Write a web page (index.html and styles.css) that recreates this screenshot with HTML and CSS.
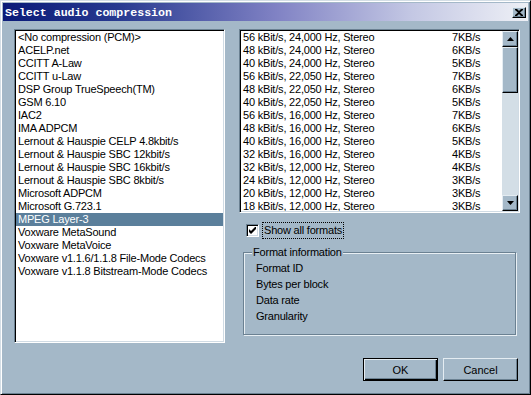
FILE: index.html
```html
<!DOCTYPE html>
<html>
<head>
    <meta charset="utf-8">
    <title>Select audio compression</title>
    <link rel="stylesheet" href="styles.css">
</head>
<body>
    <div class="window">
        <div class="titlebar">
            <span class="title">Select audio compression</span>
            <span class="close">
                <svg width="8" height="7" viewBox="0 0 8 7"><path d="M0 0h2l2 2l2-2h2v1l-3 2.5l3 2.5v1h-2l-2-2l-2 2h-2v-1l3-2.5l-3-2.5z" fill="#000"/></svg>
            </span>
        </div>
        <div class="body">
            <div class="panels">
                <ul class="listbox codecs">
                    <li>&lt;No compression (PCM)&gt;</li>
                    <li>ACELP.net</li>
                    <li>CCITT A-Law</li>
                    <li>CCITT u-Law</li>
                    <li>DSP Group TrueSpeech(TM)</li>
                    <li>GSM 6.10</li>
                    <li>IAC2</li>
                    <li>IMA ADPCM</li>
                    <li>Lernout &amp; Hauspie CELP 4.8kbit/s</li>
                    <li>Lernout &amp; Hauspie SBC 12kbit/s</li>
                    <li>Lernout &amp; Hauspie SBC 16kbit/s</li>
                    <li>Lernout &amp; Hauspie SBC 8kbit/s</li>
                    <li>Microsoft ADPCM</li>
                    <li>Microsoft G.723.1</li>
                    <li class="selected">MPEG Layer-3</li>
                    <li>Voxware MetaSound</li>
                    <li>Voxware MetaVoice</li>
                    <li>Voxware v1.1.6/1.1.8 File-Mode Codecs</li>
                    <li>Voxware v1.1.8 Bitstream-Mode Codecs</li>
                </ul>
                <div class="side">
                    <div class="listbox formats">
                        <ul class="rows">
                            <li><span class="fmt">56 kBit/s, 24,000 Hz, Stereo</span><span>7KB/s</span></li>
                            <li><span class="fmt">48 kBit/s, 24,000 Hz, Stereo</span><span>6KB/s</span></li>
                            <li><span class="fmt">40 kBit/s, 24,000 Hz, Stereo</span><span>5KB/s</span></li>
                            <li><span class="fmt">56 kBit/s, 22,050 Hz, Stereo</span><span>7KB/s</span></li>
                            <li><span class="fmt">48 kBit/s, 22,050 Hz, Stereo</span><span>6KB/s</span></li>
                            <li><span class="fmt">40 kBit/s, 22,050 Hz, Stereo</span><span>5KB/s</span></li>
                            <li><span class="fmt">56 kBit/s, 16,000 Hz, Stereo</span><span>7KB/s</span></li>
                            <li><span class="fmt">48 kBit/s, 16,000 Hz, Stereo</span><span>6KB/s</span></li>
                            <li><span class="fmt">40 kBit/s, 16,000 Hz, Stereo</span><span>5KB/s</span></li>
                            <li><span class="fmt">32 kBit/s, 16,000 Hz, Stereo</span><span>4KB/s</span></li>
                            <li><span class="fmt">32 kBit/s, 12,000 Hz, Stereo</span><span>4KB/s</span></li>
                            <li><span class="fmt">24 kBit/s, 12,000 Hz, Stereo</span><span>3KB/s</span></li>
                            <li><span class="fmt">20 kBit/s, 12,000 Hz, Stereo</span><span>3KB/s</span></li>
                            <li><span class="fmt">18 kBit/s, 12,000 Hz, Stereo</span><span>3KB/s</span></li>
                        </ul>
                        <div class="scrollbar">
                            <span class="sbtn">
                                <svg width="7" height="4" viewBox="0 0 7 4"><path d="M3.5 0L7 4H0z" fill="#000"/></svg>
                            </span>
                            <span class="thumb"></span>
                            <span class="track"></span>
                            <span class="sbtn">
                                <svg width="7" height="4" viewBox="0 0 7 4"><path d="M0 0H7L3.5 4z" fill="#000"/></svg>
                            </span>
                        </div>
                    </div>
                    <div class="check">
                        <span class="box">
                            <svg width="7" height="7" viewBox="0 0 7 7"><path d="M0 2v3l2 2l5-5v-3l-5 5z" fill="#000"/></svg>
                        </span>
                        <span class="focus">Show all formats</span>
                    </div>
                    <fieldset class="group">
                        <legend>Format information</legend>
                        <p>Format ID</p>
                        <p>Bytes per block</p>
                        <p>Data rate</p>
                        <p>Granularity</p>
                    </fieldset>
                </div>
            </div>
            <div class="buttons">
                <button class="btn default">OK</button>
                <button class="btn">Cancel</button>
            </div>
        </div>
    </div>
</body>
</html>
```

FILE: styles.css
```css
body {
    margin: 0;
    font-family: "Liberation Sans", Arial, sans-serif;
    font-size: 11px;
    letter-spacing: -0.2px;
    color: #000000;
}

.window {
    width: 531px;
    height: 395px;
    box-sizing: border-box;
    background-color: #a4b8c8;
    border: 1px solid;
    border-color: #d4dee6 #000000 #000000 #d4dee6;
    box-shadow: inset 1px 1px #ffffff, inset -1px -1px #6b8192;
    padding: 2px;
}

.titlebar {
    height: 18px;
    display: flex;
    align-items: center;
    justify-content: space-between;
    padding: 0 2px 0 2px;
    background: linear-gradient(to right, #0a1a78 0%, #283a90 22%, #8082c4 52%, #c4c8e4 78%, #eef0f6 100%);
}

.title {
    font-family: "Liberation Mono", monospace;
    font-weight: bold;
    font-size: 11.6px;
    letter-spacing: 0;
    color: #ffffff;
}

.close {
    width: 12px;
    height: 9px;
    display: flex;
    align-items: center;
    justify-content: center;
    background-color: #a4b8c8;
    border: 1px solid;
    border-color: #e4ecf2 #000000 #000000 #e4ecf2;
    box-shadow: inset -1px -1px #6b8192;
}

.body {
    padding: 8px 8px 0 11px;
}

.panels {
    display: flex;
    gap: 14px;
}

.listbox {
    box-sizing: border-box;
    margin: 0;
    padding: 0;
    list-style: none;
    background-color: #ffffff;
    border: 1px solid;
    border-color: #6b8192 #ffffff #ffffff #6b8192;
    box-shadow: inset 1px 1px #000000, inset -1px -1px #d0dbe4;
}

.codecs {
    width: 211px;
    height: 314px;
    padding: 1px;
}

.codecs li {
    height: 13px;
    line-height: 13px;
    padding-left: 2px;
    white-space: nowrap;
}

.codecs .selected {
    background-color: #5b7f9b;
    color: #ffffff;
}

.side {
    width: 281px;
    display: flex;
    flex-direction: column;
}

.formats {
    height: 184px;
    display: flex;
    padding: 1px;
    overflow: hidden;
}

.rows {
    flex: 1;
    margin: 0;
    padding: 0;
    list-style: none;
    overflow: hidden;
}

.rows li {
    display: flex;
    height: 13px;
    line-height: 13px;
    padding-left: 2px;
    white-space: nowrap;
}

.rows .fmt {
    width: 209px;
}

.scrollbar {
    width: 16px;
    display: flex;
    flex-direction: column;
    background-color: #d3dee6;
}

.sbtn,
.thumb {
    box-sizing: border-box;
    display: flex;
    align-items: center;
    justify-content: center;
    background-color: #a4b8c8;
    border: 1px solid;
    border-color: #e4ecf2 #000000 #000000 #e4ecf2;
    box-shadow: inset -1px -1px #6b8192;
}

.sbtn {
    height: 16px;
}

.thumb {
    height: 46px;
}

.track {
    flex: 1;
}

.check {
    display: flex;
    align-items: center;
    height: 17px;
    margin-top: 9px;
    padding-left: 7px;
}

.box {
    box-sizing: border-box;
    width: 13px;
    height: 13px;
    display: flex;
    align-items: center;
    justify-content: center;
    background-color: #ffffff;
    border: 1px solid;
    border-color: #6b8192 #ffffff #ffffff #6b8192;
    box-shadow: inset 1px 1px #000000, inset -1px -1px #d0dbe4;
}

.focus {
    margin-left: 4px;
    padding: 1px 1px;
    line-height: 13px;
    outline: 1px dotted #000000;
}

.group {
    margin: 7px 4px 0 4px;
    height: 89px;
    box-sizing: border-box;
    padding: 1px 0 0 12px;
    border: 1px solid #6b8192;
    box-shadow: inset 1px 1px #e8eff4, 1px 1px #e8eff4;
}

.group legend {
    padding: 0 1px;
    margin-left: -4px;
    line-height: 13px;
    background-color: #a4b8c8;
}

.group p {
    margin: 0;
    line-height: 16px;
}

.buttons {
    display: flex;
    justify-content: flex-end;
    gap: 5px;
    margin-top: 15px;
    padding-right: 2px;
}

.btn {
    box-sizing: border-box;
    width: 75px;
    height: 23px;
    padding: 0;
    font-family: "Liberation Sans", Arial, sans-serif;
    font-size: 11px;
    color: #000000;
    background-color: #a4b8c8;
    border: 1px solid;
    border-color: #e4ecf2 #000000 #000000 #e4ecf2;
    box-shadow: inset -1px -1px #6b8192;
}

.btn.default {
    border: 1px solid #000000;
    box-shadow: inset 1px 1px #e4ecf2, inset -1px -1px #000000, inset -2px -2px #6b8192;
}
```
